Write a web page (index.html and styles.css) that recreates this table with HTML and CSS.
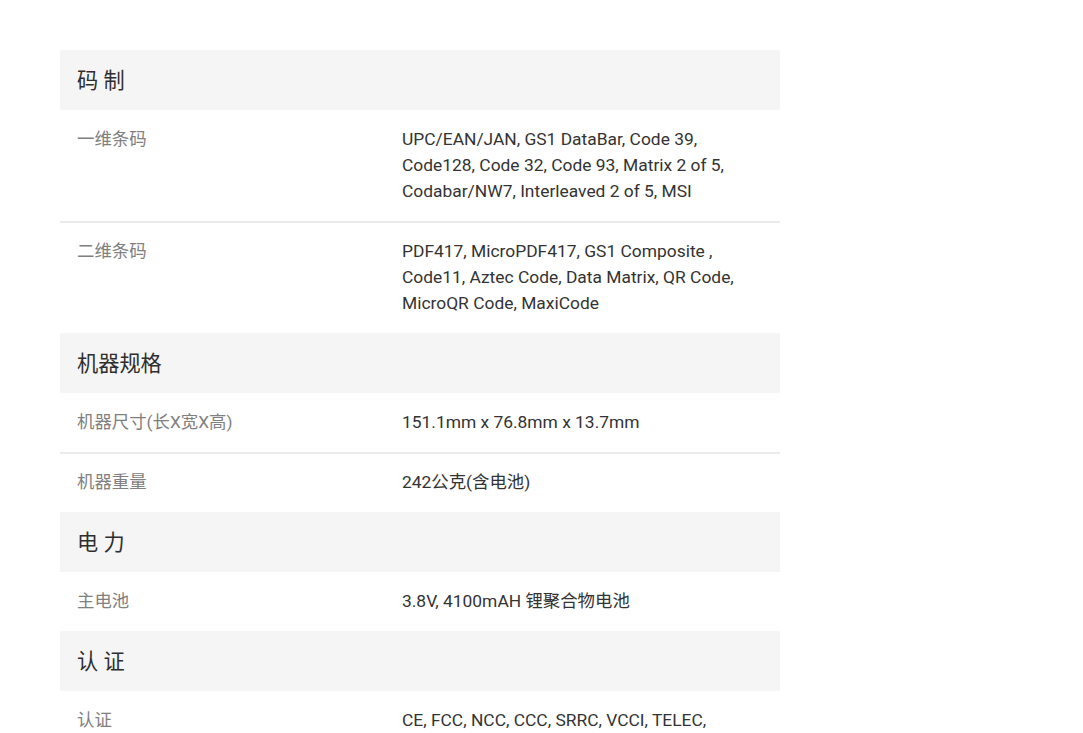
FILE: index.html
```html
<!DOCTYPE html>
<html lang="zh-CN">
<head>
<meta charset="utf-8">
<title>规格</title>
<link rel="stylesheet" href="styles.css">
</head>
<body>
<div class="spec">
  <div class="group">
    <div class="head">码 制</div>
    <div class="row"><div class="label">一维条码</div><div class="value">UPC/EAN/JAN, GS1 DataBar, Code 39, Code128, Code 32, Code 93, Matrix 2 of 5, Codabar/NW7, Interleaved 2 of 5, MSI</div></div>
    <div class="row"><div class="label">二维条码</div><div class="value">PDF417, MicroPDF417, GS1 Composite , Code11, Aztec Code, Data Matrix, QR Code, MicroQR Code, MaxiCode</div></div>
  </div>
  <div class="group">
    <div class="head">机器规格</div>
    <div class="row"><div class="label">机器尺寸(长X宽X高)</div><div class="value">151.1mm x 76.8mm x 13.7mm</div></div>
    <div class="row"><div class="label">机器重量</div><div class="value">242公克(含电池)</div></div>
  </div>
  <div class="group">
    <div class="head">电 力</div>
    <div class="row"><div class="label">主电池</div><div class="value">3.8V, 4100mAH 锂聚合物电池</div></div>
  </div>
  <div class="group">
    <div class="head">认 证</div>
    <div class="row"><div class="label">认证</div><div class="value">CE, FCC, NCC, CCC, SRRC, VCCI, TELEC,</div></div>
  </div>
</div>
</body>
</html>
```

FILE: styles.css
```css
html, body {
  margin: 0;
  padding: 0;
  background: #ffffff;
}
body {
  font-family: Roboto, "Noto Sans CJK SC", sans-serif;
  color: #333333;
}
.spec {
  width: 720px;
  margin: 50px 0 0 60px;
}
.head {
  height: 60px;
  box-sizing: border-box;
  padding: 0 0 3px 17px;
  background: #f5f5f5;
  display: flex;
  align-items: center;
  font-size: 21.2px;
  color: #2e2e2e;
}
.row {
  display: grid;
  grid-template-columns: 342px 1fr;
  padding: 16px 17px 17px 0;
  font-size: 17.4px;
  line-height: 26px;
}
.row + .row {
  border-top: 2px solid #ebebeb;
  padding-top: 15px;
}
.label {
  padding-left: 17px;
  color: #808080;
}
.value {
  color: #333333;
}
```
